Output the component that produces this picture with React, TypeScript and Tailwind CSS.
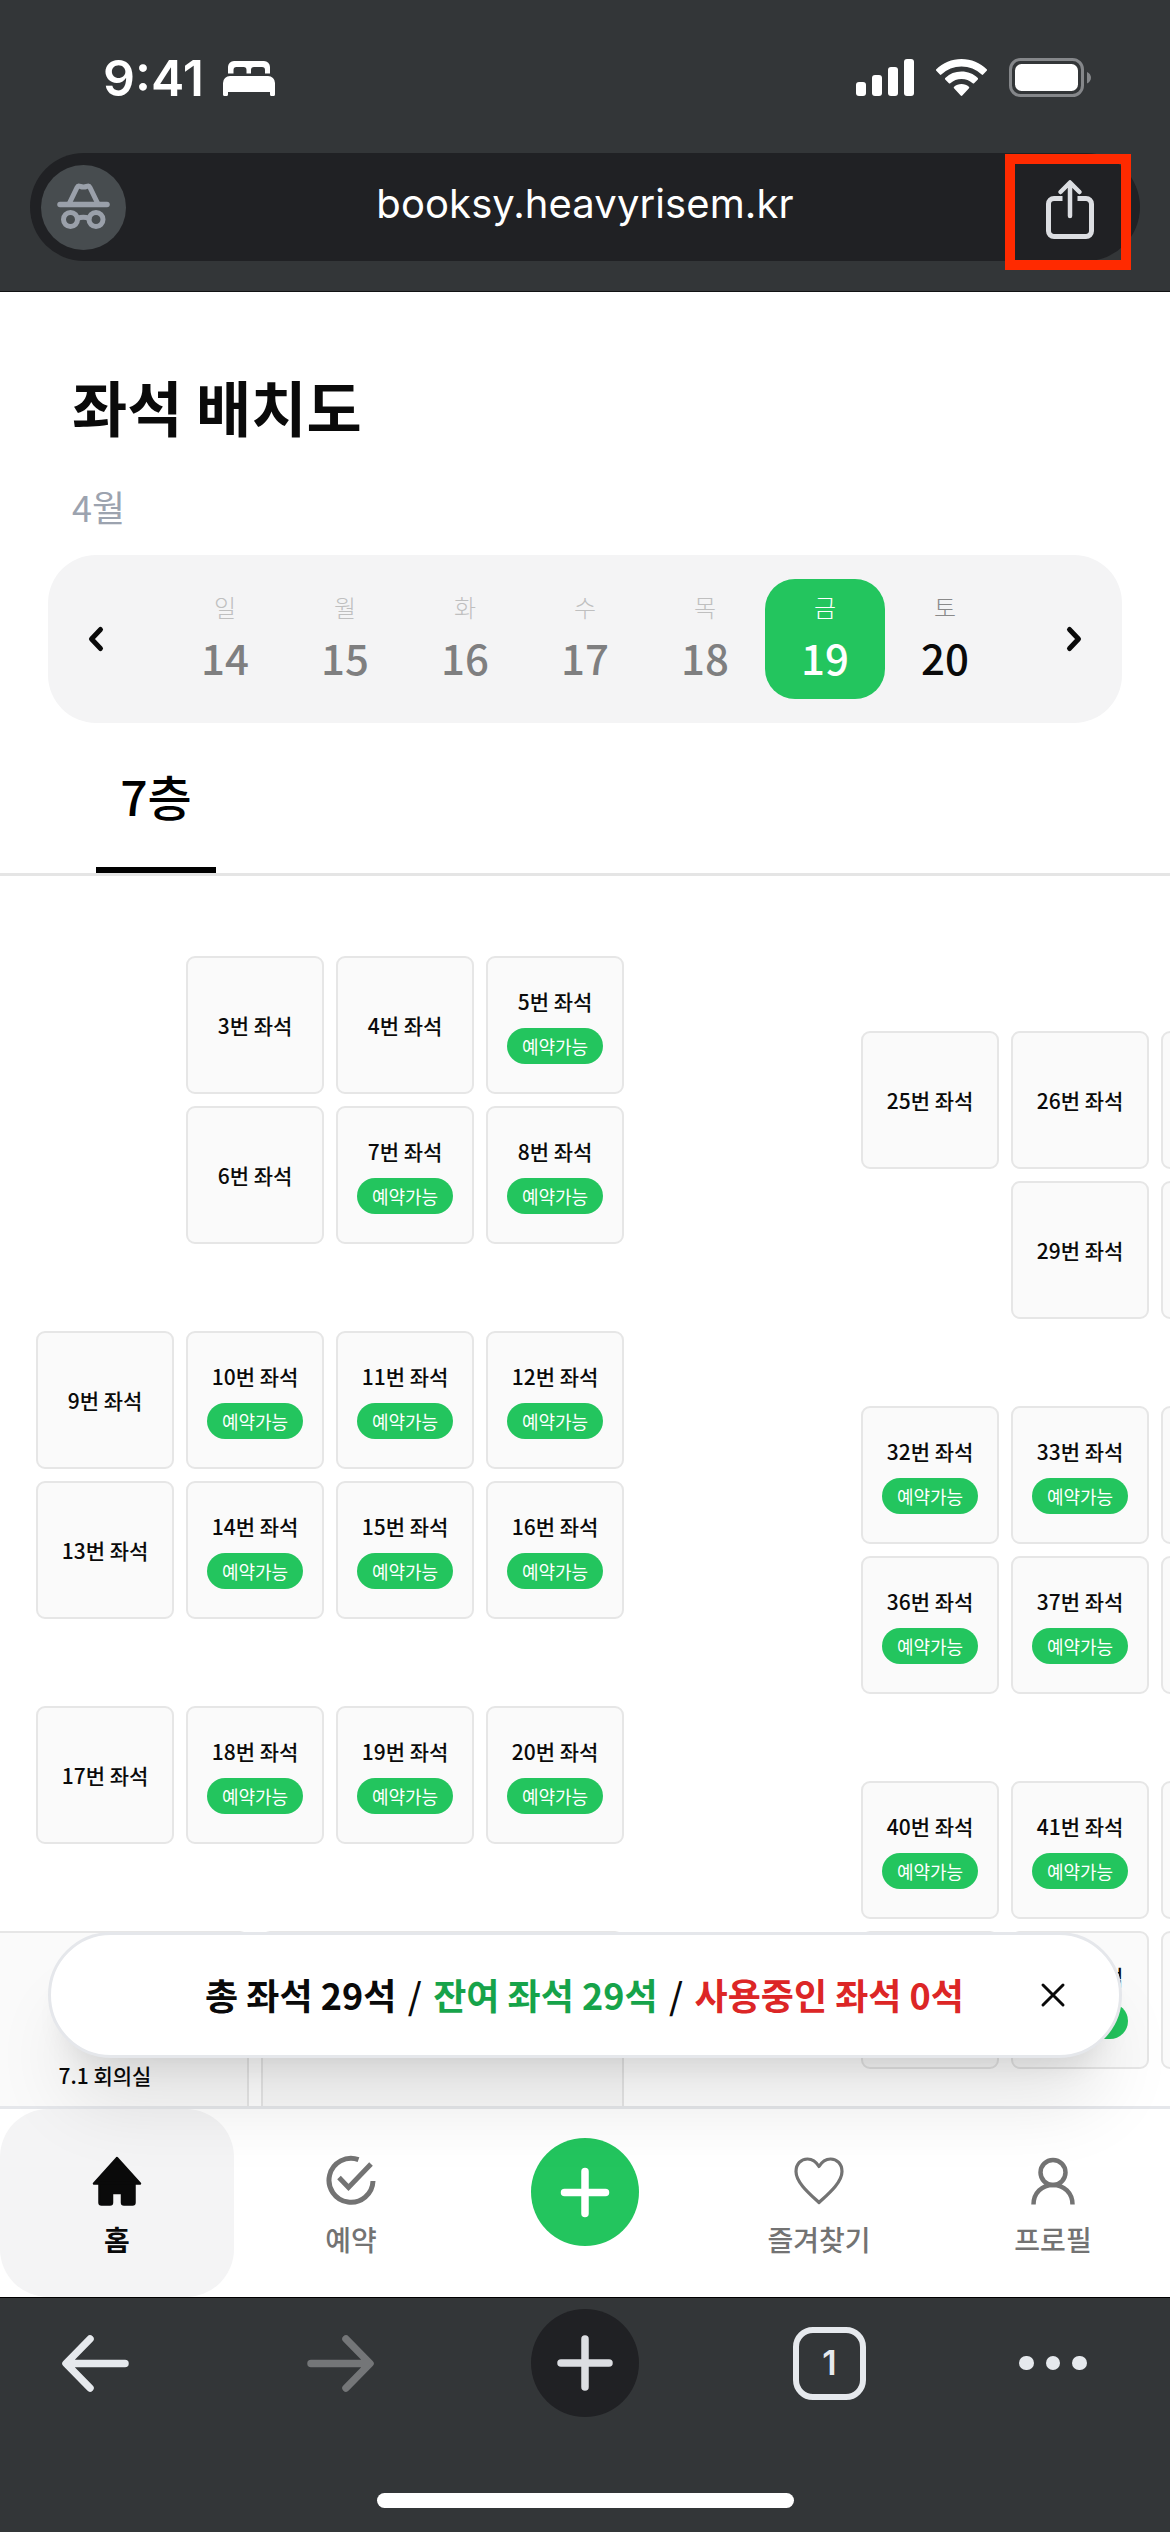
import React from "react";

type Seat = { name?: string; col: number; row: number; open?: boolean; w?: number; h?: number };

// Column and row count half-seat tracks of 75px.
const seats: Seat[] = [
  { name: "3번 좌석", col: 4, row: 1 },
  { name: "4번 좌석", col: 6, row: 1 },
  { name: "5번 좌석", col: 8, row: 1, open: true },
  { name: "6번 좌석", col: 4, row: 3 },
  { name: "7번 좌석", col: 6, row: 3, open: true },
  { name: "8번 좌석", col: 8, row: 3, open: true },
  { name: "9번 좌석", col: 2, row: 6 },
  { name: "10번 좌석", col: 4, row: 6, open: true },
  { name: "11번 좌석", col: 6, row: 6, open: true },
  { name: "12번 좌석", col: 8, row: 6, open: true },
  { name: "13번 좌석", col: 2, row: 8 },
  { name: "14번 좌석", col: 4, row: 8, open: true },
  { name: "15번 좌석", col: 6, row: 8, open: true },
  { name: "16번 좌석", col: 8, row: 8, open: true },
  { name: "17번 좌석", col: 2, row: 11 },
  { name: "18번 좌석", col: 4, row: 11, open: true },
  { name: "19번 좌석", col: 6, row: 11, open: true },
  { name: "20번 좌석", col: 8, row: 11, open: true },
  { name: "7.1 회의실", col: 1, row: 14, w: 4, h: 4 },
  { col: 5, row: 14, w: 5, h: 4 },
  { name: "25번 좌석", col: 13, row: 2 },
  { name: "26번 좌석", col: 15, row: 2 },
  { col: 17, row: 2 },
  { name: "29번 좌석", col: 15, row: 4 },
  { col: 17, row: 4 },
  { name: "32번 좌석", col: 13, row: 7, open: true },
  { name: "33번 좌석", col: 15, row: 7, open: true },
  { col: 17, row: 7 },
  { name: "36번 좌석", col: 13, row: 9, open: true },
  { name: "37번 좌석", col: 15, row: 9, open: true },
  { col: 17, row: 9 },
  { name: "40번 좌석", col: 13, row: 12, open: true },
  { name: "41번 좌석", col: 15, row: 12, open: true },
  { col: 17, row: 12 },
  { col: 13, row: 14 },
  { name: "45번 좌석", col: 15, row: 14, open: true },
  { col: 17, row: 14 },
];

const days = [
  { d: "일", n: 14 },
  { d: "월", n: 15 },
  { d: "화", n: 16 },
  { d: "수", n: 17 },
  { d: "목", n: 18 },
  { d: "금", n: 19 },
  { d: "토", n: 20 },
];

function StatusBar() {
  return (
    <div className="flex h-[153px] items-start justify-between pt-[57px] pr-[78px] pl-[103px]">
      <div className="flex items-start">
        <span className="w-[120px] text-[50px] leading-[42px] font-semibold text-white">9:41</span>
        <svg className="mt-[3px] h-[38px] w-[52px]" viewBox="0 0 52 38" fill="#fff">
          <path d="M5 13.5V7a6 6 0 0 1 6-6h30a6 6 0 0 1 6 6v6.500H42V10a3 3 0 0 0-3-3h-8a3 3 0 0 0-3 3v3.500h-4.500V10a3 3 0 0 0-3-3h-7a3 3 0 0 0-3 3v3.500z" />
          <path d="M0 23a7 7 0 0 1 7-7h38a7 7 0 0 1 7 7v11.500a1.500 1.500 0 0 1-1.500 1.500h-2a1.500 1.500 0 0 1-1.500-1.500V32H5v2.500A1.500 1.500 0 0 1 3.500 36h-2A1.500 1.500 0 0 1 0 34.500z" />
        </svg>
      </div>
      <svg className="h-[42px] w-[236px]" viewBox="0 0 236 42" fill="#fff">
        <rect x="0" y="25" width="10" height="14" rx="3" />
        <rect x="16" y="18" width="10" height="21" rx="3" />
        <rect x="32" y="10" width="10" height="29" rx="3" />
        <rect x="48" y="2" width="10" height="37" rx="3" />
        <path d="M105.500 2c9.800 0 18.700 3.800 25.200 10.300.4.400.4 1 0 1.500l-3.600 3.800c-.4.400-1 .4-1.400 0a29 29 0 0 0-40.400 0c-.4.400-1 .4-1.400 0l-3.600-3.800c-.4-.5-.4-1.100 0-1.500C86.800 5.800 95.700 2 105.500 2z" />
        <path d="M105.500 14.500c6.300 0 12 2.400 16.300 6.400.4.400.4 1 0 1.500l-3.700 3.900c-.4.400-1 .4-1.400 0a16.500 16.500 0 0 0-22.400 0c-.4.400-1 .4-1.400 0l-3.700-3.900c-.4-.5-.4-1.100 0-1.500a23.800 23.800 0 0 1 16.300-6.400z" />
        <path d="M105.500 27c2.800 0 5.400 1 7.400 2.700.4.400.5 1 .1 1.500l-6.700 7.300c-.4.500-1.200.5-1.600 0L98 31.200c-.4-.5-.3-1.100.1-1.500 2-1.700 4.600-2.700 7.400-2.700z" />
        <rect x="154.500" y="2.500" width="72" height="36" rx="10" fill="none" stroke="#85878a" strokeWidth="3" />
        <rect x="159" y="7" width="63" height="27" rx="6.500" />
        <path d="M231 15c2.500 1 4 3.300 4 5.700s-1.500 4.700-4 5.700z" fill="#85878a" />
      </svg>
    </div>
  );
}

function AddressBar() {
  return (
    <div className="relative mx-[30px] flex h-[108px] items-center rounded-full bg-[#202124] pl-[11px]">
      <div className="flex size-[85px] items-center justify-center rounded-full bg-[#474c4f]">
        <svg className="size-[85px]" viewBox="0 0 85 85" fill="none" stroke="#9aa0aa" strokeWidth="5" strokeLinecap="round" strokeLinejoin="round">
          <path d="M19 39.500h47" strokeWidth="5.500" />
          <path d="M28.500 38l7.500-15.500c.7-1.500 2-1.600 3.200-1.100 2.200.9 4.400.9 6.600 0 1.200-.5 2.500-.4 3.200 1.100L56.500 38" />
          <circle cx="29.500" cy="54.500" r="7" />
          <circle cx="55" cy="54.500" r="7" />
          <path d="M36.500 53.500q5.800-2.500 11.500 0" />
        </svg>
      </div>
      <div className="absolute inset-x-0 top-[26px] text-center text-[40px] leading-[50px] tracking-[0.1px] text-white">booksy.heavyrisem.kr</div>
      <div className="absolute top-px left-[975px] flex h-[116px] w-[126px] items-center justify-center border-[10px] border-[#ff2a00]">
        <svg className="mb-[7px] ml-[4px] h-[60px] w-[50px] shrink-0" viewBox="0 0 50 60" fill="none" stroke="#dcdee2" strokeWidth="5" strokeLinecap="round" strokeLinejoin="round">
          <path d="M17.500 19.500H9a5.500 5.500 0 0 0-5.500 5.500v27A5.500 5.500 0 0 0 9 57.500h32a5.500 5.500 0 0 0 5.500-5.500V25a5.500 5.500 0 0 0-5.500-5.500h-8.500" strokeLinecap="butt" />
          <path d="M25 37V4M15.500 13L25 3.500 34.500 13" strokeWidth="4.500" />
        </svg>
      </div>
    </div>
  );
}

function DatePicker() {
  return (
    <div className="mx-12 flex h-[168px] items-center justify-between rounded-[48px] bg-[#f4f4f5] px-[39px]">
      <svg className="h-[28px] w-[18px]" viewBox="0 0 18 28" fill="none" stroke="#0a0a0a" strokeWidth="5" strokeLinecap="round" strokeLinejoin="round">
        <path d="M13.500 4.500L4.500 14l9 9.500" />
      </svg>
      <div className="flex">
        {days.map(({ d, n }) => {
          const selected = n === 19;
          const past = n < 19;
          return (
            <div key={n} className={"flex h-[120px] w-[120px] flex-col items-center rounded-[30px] pt-[10px] " + (selected ? "bg-[#23c55e] text-white" : past ? "text-[#7f7f80]" : "text-[#0a0a0a]")}>
              <span className={"text-[24px] leading-[36px] font-light " + (selected ? "text-white" : past ? "text-[#bfbfbf]" : "text-[#8a8a8a]")}>{d}</span>
              <span className="text-[42px] leading-[64px] font-medium">{n}</span>
            </div>
          );
        })}
      </div>
      <svg className="h-[28px] w-[18px]" viewBox="0 0 18 28" fill="none" stroke="#0a0a0a" strokeWidth="5" strokeLinecap="round" strokeLinejoin="round">
        <path d="M4.500 4.500l9 9.500-9 9.500" />
      </svg>
    </div>
  );
}

function SeatCard({ seat }: { seat: Seat }) {
  return (
    <div
      className="mt-[6px] mr-[6px] mb-[6px] ml-[6px] flex flex-col items-center justify-center gap-[11px] rounded-[9px] border-2 border-[#e6e6e6] bg-[#fafafa]"
      style={{ gridColumn: `${seat.col} / span ${seat.w ?? 2}`, gridRow: `${seat.row} / span ${seat.h ?? 2}` }}
    >
      {seat.name && <span className="text-[21px] leading-[31px] font-medium whitespace-nowrap text-[#0a0a0a]">{seat.name}</span>}
      {seat.open && <span className="h-[36px] w-[96px] rounded-full bg-[#23c55e] text-center text-[18px] leading-[36px] text-white">예약가능</span>}
    </div>
  );
}

function NavItem({ label, active, children }: { label: string; active?: boolean; children: React.ReactNode }) {
  return (
    <div className={"flex h-[188px] w-[234px] flex-col items-center rounded-[48px] pt-[45px] " + (active ? "bg-[#f4f4f5] text-[#0a0a0a]" : "text-[#737373]")}>
      <svg className="h-[54px] w-[54px]" viewBox="0 0 54 54">{children}</svg>
      <span className={"mt-[10px] text-[28px] leading-[42px] " + (active ? "font-bold" : "font-medium")}>{label}</span>
    </div>
  );
}

function Toast() {
  return (
    <div className="absolute top-[1932px] left-[48px] flex h-[126px] w-[1074px] items-center rounded-full border-[3px] border-[#e5e7eb] bg-white pl-[154px] shadow-[0_60px_75px_-15px_rgba(0,0,0,0.1),0_24px_30px_-18px_rgba(0,0,0,0.1)]">
      <div className="mb-[2px] flex w-[759px] justify-between text-[36px] leading-[54px] font-bold whitespace-nowrap text-[#0a0a0a]">
        <span>총 좌석 29석</span>
        <span className="font-medium">/</span>
        <span className="text-[#16a34a]">잔여 좌석 29석</span>
        <span className="font-medium">/</span>
        <span className="text-[#dc2626]">사용중인 좌석 0석</span>
      </div>
      <svg className="ml-[76px] size-[26px]" viewBox="0 0 26 26" fill="none" stroke="#0a0a0a" strokeWidth="3" strokeLinecap="round">
        <path d="M3 3l20 20M23 3L3 23" />
      </svg>
    </div>
  );
}

function BrowserToolbar() {
  return (
    <div className="flex h-[235px] flex-col justify-between border-t border-black bg-[#333638] pb-[24px]">
      <div className="mt-[11px] flex h-[108px] items-center">
        <svg className="ml-[60px] h-[60px] w-[72px]" viewBox="0 0 72 60" fill="none" stroke="#e6e9ed" strokeWidth="7.500" strokeLinecap="round" strokeLinejoin="round">
          <path d="M65 30.500H7M30 6L6 30.500 30 55" />
        </svg>
        <svg className="ml-[172px] h-[60px] w-[72px]" viewBox="0 0 72 60" fill="none" stroke="#747678" strokeWidth="7.500" strokeLinecap="round" strokeLinejoin="round">
          <path d="M7 30.500h58M42 6l24 24.500L42 55" />
        </svg>
        <div className="ml-[155px] flex size-[108px] items-center justify-center rounded-full bg-[#202124]">
          <svg className="size-[60px]" viewBox="0 0 60 60" fill="none" stroke="#dcdee2" strokeWidth="7.500" strokeLinecap="round">
            <path d="M30 6v48M6 30h48" />
          </svg>
        </div>
        <div className="ml-[154px] flex size-[73px] items-center justify-center rounded-[20px] border-[6.500px] border-[#e6e9ed] font-[Inter,sans-serif] text-[34px] leading-none font-semibold text-[#e6e9ed]">1</div>
        <div className="ml-[153px] flex gap-[12px]">
          <span className="size-[14.500px] rounded-full bg-[#e6e9ed]" />
          <span className="size-[14.500px] rounded-full bg-[#e6e9ed]" />
          <span className="size-[14.500px] rounded-full bg-[#e6e9ed]" />
        </div>
      </div>
      <div className="mx-auto h-[15px] w-[417px] rounded-full bg-white" />
    </div>
  );
}

export default function App() {
  return (
    <div className="relative h-[2532px] w-[1170px] overflow-hidden bg-white font-['Noto_Sans_CJK_KR',sans-serif]">
      <header className="h-[292px] border-b border-[#111213] bg-[#333638] font-[Inter,sans-serif]">
        <StatusBar />
        <AddressBar />
      </header>

      <div className="h-[263px] pt-[69px] pl-[72px]">
        <h1 className="text-[60px] leading-[90px] font-bold text-[#0a0a0a]">좌석 배치도</h1>
        <p className="mt-[28px] text-[36px] leading-[54px] text-[#9ca3af]">4월</p>
      </div>
      <DatePicker />

      <div className="flex h-[153px] border-b-[3px] border-[#e5e5e5] pl-24">
        <div className="h-[150px] w-[120px] border-b-[6px] border-black pt-[36px] text-center text-[48px] leading-[72px] font-medium text-black">7층</div>
      </div>

      <div className="h-[1230px] overflow-hidden pt-[74px]">
        <div className="-ml-[45px] grid w-max grid-cols-[repeat(18,75px)] grid-rows-[repeat(17,75px)]">
          {seats.map((s, i) => (
            <SeatCard key={i} seat={s} />
          ))}
        </div>
      </div>

      <nav className="flex h-[191px] border-t-[3px] border-[#e5e7eb] bg-white">
        <NavItem label="홈" active>
          <path d="M27 4L4 29.500h46z M9.500 29h35v19.500a2 2 0 0 1-2 2H34a2 2 0 0 1-2-2V39H22v9.500a2 2 0 0 1-2 2h-8.500a2 2 0 0 1-2-2z" fill="currentColor" stroke="currentColor" strokeWidth="2.500" strokeLinejoin="round" />
        </NavItem>
        <NavItem label="예약">
          <g fill="none" stroke="currentColor" strokeWidth="5">
            <path d="M34.500 5.600A22 22 0 1 0 49 27" />
            <path d="M15 23.500L24.500 33.500 47 10" />
          </g>
        </NavItem>
        <div className="flex h-[188px] w-[234px] justify-center pt-[29px]">
          <div className="flex size-[108px] items-center justify-center rounded-full bg-[#23c55e]">
            <svg className="size-[60px]" viewBox="0 0 60 60" fill="none" stroke="#fff" strokeWidth="7.500" strokeLinecap="round">
              <path d="M30 9.500v42M9.500 30.500h41" />
            </svg>
          </div>
        </div>
        <NavItem label="즐겨찾기">
          <path d="M27 48.500C19 41 4 29 4 17.500 4 10 9 5 15.500 5 20.500 5 24 7.500 27 12.500 30 7.500 33.500 5 38.500 5 45 5 50 10 50 17.500 50 29 35 41 27 48.500z" fill="none" stroke="currentColor" strokeWidth="3.200" strokeLinejoin="round" />
        </NavItem>
        <NavItem label="프로필">
          <g fill="none" stroke="currentColor" strokeWidth="4.500">
            <circle cx="27" cy="18.500" r="12.500" />
            <path d="M7.500 50.500C7.500 39 16 31 27 31s19.500 8 19.500 19.500" />
          </g>
        </NavItem>
      </nav>

      <Toast />
      <BrowserToolbar />
    </div>
  );
}
